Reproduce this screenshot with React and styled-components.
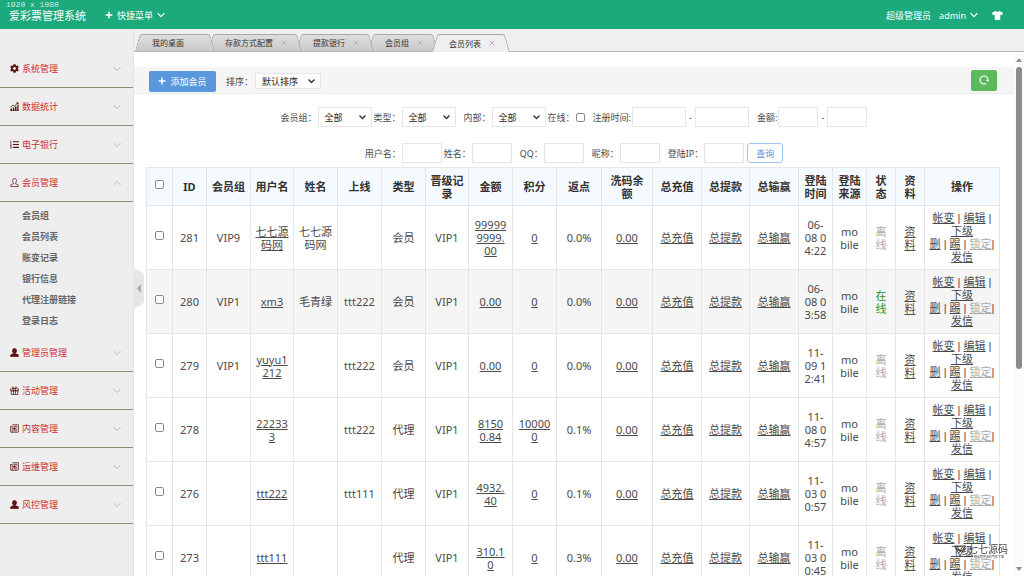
import React from "react";
import styled, { createGlobalStyle, css } from "styled-components";
import { FaPlus, FaTshirt, FaCog, FaListOl } from "react-icons/fa";

const GlobalStyle = createGlobalStyle`
  * {
    box-sizing: border-box;
  }

  body {
    margin: 0;
    background: #fff;
    color: #4a4a4a;
    font-family: "Noto Sans", "Noto Sans CJK SC", sans-serif;
    font-size: 9px;
    line-height: 13px;
  }

  button, input, select {
    margin: 0;
    font: inherit;
    color: inherit;
  }

  a {
    color: inherit;
  }
`;

const Page = styled.div`
  display: flex;
  flex-direction: column;
  height: 100vh;
  overflow: hidden;
`;

const TopBar = styled.header`
  position: relative;
  flex: none;
  display: flex;
  align-items: center;
  height: 29px;
  padding: 1px 21px 0 9px;
  background: #1caa7c;
  color: #fff;
`;

const Resolution = styled.span`
  position: absolute;
  left: 6px;
  top: 0;
  font-family: "Liberation Mono", monospace;
  font-size: 8px;
  line-height: 9px;
  color: #d5f0e6;
`;

const Brand = styled.a`
  margin-right: 19px;
  font-size: 11px;
  text-decoration: none;
`;

const TopButton = styled.button`
  display: flex;
  align-items: center;
  gap: 4px;
  padding: 0;
  border: 0;
  background: none;
  cursor: pointer;
`;

const TopRight = styled.div`
  display: flex;
  align-items: center;
  margin-left: auto;
  gap: 8px;
`;

const SkinButton = styled(TopButton)`
  margin-left: 6px;
  font-size: 11px;
`;

const Body = styled.div`
  flex: 1;
  display: flex;
  min-height: 0;
`;

const Sidebar = styled.nav`
  position: relative;
  flex: none;
  width: 134px;
  padding-top: 21px;
  border-right: 1px solid #e2e2e2;
  background: #eee;
`;

const MenuHeader = styled.button`
  display: flex;
  align-items: center;
  gap: 3px;
  width: 100%;
  height: 38px;
  padding: 0 12px 0 10px;
  border: 0;
  border-bottom: 1px solid #8e907c;
  background: none;
  color: #cf2f35;
  text-align: left;
  cursor: pointer;

  .menu-icon {
    width: 9px;
    height: 9px;
    color: #5c1010;
  }

  .menu-arrow {
    margin-left: auto;
    color: #b4b4b4;
  }
`;

const SubMenu = styled.ul`
  margin: 0;
  padding: 3px 0 3px 22px;
  list-style: none;
  font-weight: 600;
  color: #666;

  li {
    line-height: 21px;
  }

  a {
    text-decoration: none;
  }
`;

const CollapseHandle = styled.button`
  position: absolute;
  left: 133px;
  top: 239px;
  z-index: 2;
  width: 11px;
  height: 41px;
  padding: 0;
  border: 0;
  background: none;

  svg {
    display: block;
  }
`;

const Main = styled.div`
  flex: 1;
  display: flex;
  flex-direction: column;
  min-width: 0;
`;

const TabBar = styled.div`
  flex: none;
  display: flex;
  align-items: flex-end;
  height: 23px;
  padding-left: 1px;
  border-bottom: 1px solid #b4b4b4;
  background: #efeef0;
`;

const tabSide = css`
  content: "";
  position: absolute;
  top: 0;
  bottom: 0;
  z-index: -1;
  border-top: 1px solid #a9a9a9;
  background: ${p => (p.$active ? "#efeef0" : "linear-gradient(#dedede, #c9c9c9)")};
`;

const Tab = styled.div`
  position: relative;
  isolation: isolate;
  z-index: ${p => (p.$active ? 9 : 8 - p.$index)};
  display: flex;
  align-items: center;
  gap: 8px;
  height: ${p => (p.$active ? 18 : 17)}px;
  margin-left: ${p => (p.$index ? -6 : 0)}px;
  margin-bottom: ${p => (p.$active ? -1 : 0)}px;
  padding: 0 ${p => (p.$closable ? 15 : 30)}px 0 17px;
  font-size: 8px;
  color: #333;

  &::before {
    ${tabSide}
    left: 0;
    right: 50%;
    border-left: 1px solid #a9a9a9;
    border-top-left-radius: 3px;
    transform: skewX(-16deg);
    transform-origin: bottom;
  }

  &::after {
    ${tabSide}
    left: calc(50% - 4px);
    right: 0;
    border-right: 1px solid #a9a9a9;
    border-top-right-radius: 3px;
    transform: skewX(16deg);
    transform-origin: bottom;
  }
`;

const TabLabel = styled.button`
  padding: 0;
  border: 0;
  background: none;
`;

const TabClose = styled.button`
  display: flex;
  padding: 0;
  border: 0;
  background: none;
  color: #b0b0b0;
`;

const Frame = styled.div`
  flex: 1;
  display: flex;
  min-height: 0;
`;

const Content = styled.main`
  flex: 1;
  min-width: 0;
  padding-top: 15px;
  overflow: hidden;
`;

const Toolbar = styled.div`
  display: flex;
  align-items: center;
  height: 27px;
  padding: 2px 17px 0 15px;
  border-bottom: 1px solid #ebebeb;
  background: #f5f5f5;

  label {
    margin-right: 2px;
  }
`;

const AddButton = styled.button`
  display: flex;
  align-items: center;
  justify-content: center;
  gap: 4px;
  width: 67px;
  height: 21px;
  margin-right: 10px;
  padding: 0;
  border: 0;
  border-radius: 2px;
  background: #5a98de;
  color: #fff;
`;

const RefreshButton = styled.button`
  display: flex;
  align-items: center;
  justify-content: center;
  width: 26px;
  height: 21px;
  margin-left: auto;
  margin-bottom: 2px;
  padding: 0;
  border: 0;
  border-radius: 2px;
  background: #5eb95e;
  color: #fff;
`;

const SelectBox = styled.span`
  display: inline-grid;
  align-items: center;
  width: ${p => p.$width}px;

  select {
    grid-area: 1 / 1;
    width: 100%;
    height: ${p => p.$height}px;
    padding: 0 6px;
    border: 1px solid #e6e6e6;
    border-radius: 0;
    background: #fff;
    color: #222;
    appearance: none;
  }

  svg {
    grid-area: 1 / 1;
    justify-self: end;
    margin-right: 6px;
    color: #333;
    pointer-events: none;
  }
`;

const Filters = styled.form`
  display: grid;
  gap: 16px;
  padding: 13px 14px 4px 12px;
`;

const FilterRow = styled.div`
  display: flex;
  align-items: center;
  justify-content: center;
  height: 20px;
`;

const Field = styled.span`
  display: flex;
  align-items: center;
  gap: 1px;
  margin-left: ${p => (p.$wide ? 8 : 2)}px;
`;

const TextInput = styled.input`
  width: ${p => (p.$wide ? 54 : 40)}px;
  height: 20px;
  padding: 0 4px;
  border: 1px solid #e6e6e6;
  outline: 0;
  background: #fff;
`;

const Dash = styled.span`
  width: 7px;
  text-align: center;
`;

const Checkbox = styled.input.attrs({ type: "checkbox" })`
  appearance: none;
  width: 9px;
  height: 9px;
  border: 1px solid #8a8a8a;
  border-radius: 2px;
  background: #fff;

  &:checked {
    background: #5a98de;
  }
`;

const QueryButton = styled.button`
  width: 36px;
  height: 20px;
  margin-left: 3px;
  padding: 0;
  border: 1px solid #9fc5f3;
  border-radius: 3px;
  background: #fff;
  color: #5a98de;
`;

const TableWrap = styled.div`
  padding: 0 14px 0 12px;
`;

const Table = styled.table`
  width: 100%;
  border-collapse: collapse;
  table-layout: fixed;
  font-size: 11px;
  line-height: 13px;
  text-align: center;

  th,
  td {
    height: 64px;
    padding: 0;
    border: 1px solid #e6e6e6;
    white-space: pre;
  }

  th {
    height: 38px;
    background: #f5fafe;
    color: #333;
    font-weight: 700;
  }

  ${Checkbox} {
    display: block;
    margin: 0 auto 4px;
  }
`;

const Row = styled.tr`
  background: ${p => (p.$active ? "#f5f5f5" : "#fff")};
`;

const Actions = styled.td`
  font-family: "Liberation Sans", "Noto Sans CJK SC", sans-serif;
`;

const Status = styled.span`
  color: ${p => (p.$online ? "#1c991c" : "#aaa")};
`;

const LockLink = styled.a`
  color: #aaa;
`;

const ScrollTrack = styled.div`
  flex: none;
  display: flex;
  flex-direction: column;
  align-items: center;
  width: 10px;
  padding: 6px 0 5px;
  background: #fcfcfc;
  color: #8a8a8a;

  svg {
    display: block;
  }
`;

const ScrollRail = styled.div`
  flex: 1;
  padding: 5px 0;
`;

const ScrollThumb = styled.div`
  width: 6px;
  height: 61%;
  border-radius: 3px;
  background: #8b8b8b;
`;

const Watermark = styled.div`
  position: fixed;
  right: 16px;
  bottom: 17px;
  display: flex;
  gap: 2px;
  color: #444;
  font-family: "Liberation Serif", "Noto Sans CJK SC", serif;
  font-size: 10px;
  line-height: 11px;

  small {
    display: block;
    font-size: 3px;
    line-height: 4px;
  }
`;

const Chevron = ({ up, width = 8, stroke = 1, className }) => (
  <svg className={className} width={width} height="6" viewBox="0 0 8 6" fill="none" stroke="currentColor" strokeWidth={stroke}>
    <path d={up ? "M.6 4.8 4 1.4l3.4 3.4" : "M.6 1.2 4 4.6l3.4-3.4"} />
  </svg>
);

const ChartIcon = props => (
  <svg viewBox="0 0 18 18" fill="currentColor" {...props}>
    <path d="M1 13h3v4H1zM5.5 11h3v6h-3zM10 9h3v8h-3zM14.500 6H17v11h-2.500zM0 17h18v1H0z" />
    <path d="M1 10.500 6 6.500l3 1.500 6-5.500" fill="none" stroke="currentColor" strokeWidth="1.600" />
    <path d="M11.500 1H17v5z" />
  </svg>
);

const UserIcon = ({ outline, ...props }) => (
  <svg viewBox="0 0 18 18" fill={outline ? "none" : "currentColor"} stroke="currentColor" strokeWidth="1.400" {...props}>
    <path d="M9 1.200c2.600 0 4 1.800 4 4.200 0 2-.9 3.900-2.200 4.800v1.300l5 1.600c.8.300 1 .8 1 1.600V17H1.200v-2.300c0-.8.300-1.300 1-1.600l5-1.600v-1.300C5.900 9.300 5 7.400 5 5.400 5 3 6.400 1.200 9 1.200z" />
  </svg>
);

const GiftIcon = props => (
  <svg viewBox="0 0 18 18" fill="none" stroke="currentColor" strokeWidth="1.400" {...props}>
    <path d="M1 5.500h16v4H1zM2.500 9.500h13V17h-13zM7 5.500V17M11 5.500V17M9 5C8 2 4.500 1 4.500 3c0 1.300 1.500 2 4.500 2 3 0 4.500-.7 4.500-2C13.500 1 10 2 9 5z" />
  </svg>
);

const NewsIcon = props => (
  <svg viewBox="0 0 18 18" fill="none" stroke="currentColor" strokeWidth="1.500" {...props}>
    <path d="M4.500 1.500h12.700v13.200q0 1.800-1.800 1.800H2.800Q.8 16.500.8 14.500V5h3.700v9.700q0 1.800-1.700 1.800M7 4.700h7.700M7 13.700h7.700M12.500 7.700h2.200M12.500 10.700h2.200" />
    <path d="M7.500 7.700h3v3h-3z" fill="currentColor" />
  </svg>
);

const RefreshIcon = () => (
  <svg width="10" height="10" viewBox="0 0 20 20" fill="none" stroke="currentColor" strokeWidth="2.200">
    <path d="M14 16.900A8 8 0 1 1 18 10" />
    <path d="M13.500 10H20l-2.500 4z" fill="currentColor" stroke="none" />
  </svg>
);

const MemberIcon = props => <UserIcon outline {...props} />;

const menus = [
  { title: "系统管理", icon: FaCog },
  { title: "数据统计", icon: ChartIcon },
  { title: "电子银行", icon: FaListOl },
  {
    title: "会员管理",
    icon: MemberIcon,
    items: ["会员组", "会员列表", "账变记录", "银行信息", "代理注册链接", "登录日志"]
  },
  { title: "管理员管理", icon: UserIcon },
  { title: "活动管理", icon: GiftIcon },
  { title: "内容管理", icon: NewsIcon },
  { title: "运维管理", icon: NewsIcon },
  { title: "风控管理", icon: UserIcon }
];

const tabs = ["我的桌面", "存款方式配置", "提款银行", "会员组", "会员列表"];

const columns = [
  ["ID", 34],
  ["会员组", 44],
  ["用户名", 43],
  ["姓名", 44],
  ["上线", 44],
  ["类型", 44],
  ["晋级记\n录", 43],
  ["金额", 44],
  ["积分", 44],
  ["返点", 45],
  ["洗码余\n额", 51],
  ["总充值", 49],
  ["总提款", 48],
  ["总输赢", 49],
  ["登陆\n时间", 34],
  ["登陆\n来源", 34],
  ["状\n态", 29],
  ["资\n料", 29],
  ["操作"]
];

const members = [
  { id: 281, group: "VIP9", user: "七七源\n码网", name: "七七源\n码网", parent: "", type: "会员", amount: "99999\n9999.\n00", points: "0", rebate: "0.0%", time: "06-\n08 0\n4:22" },
  { id: 280, group: "VIP1", user: "xm3", name: "毛青绿", parent: "ttt222", type: "会员", amount: "0.00", points: "0", rebate: "0.0%", time: "06-\n08 0\n3:58", online: true },
  { id: 279, group: "VIP1", user: "yuyu1\n212", name: "", parent: "ttt222", type: "会员", amount: "0.00", points: "0", rebate: "0.0%", time: "11-\n09 1\n2:41" },
  { id: 278, group: "", user: "22233\n3", name: "", parent: "ttt222", type: "代理", amount: "8150\n0.84", points: "10000\n0", rebate: "0.1%", time: "11-\n08 0\n4:57" },
  { id: 276, group: "", user: "ttt222", name: "", parent: "ttt111", type: "代理", amount: "4932.\n40", points: "0", rebate: "0.1%", time: "11-\n03 0\n0:57" },
  { id: 273, group: "", user: "ttt111", name: "", parent: "", type: "代理", amount: "310.1\n0", points: "0", rebate: "0.3%", time: "11-\n03 0\n0:45" }
];

const Select = ({ id, width = 54, height = 20, option }) => (
  <SelectBox $width={width} $height={height}>
    <select id={id}>
      <option>{option}</option>
    </select>
    <Chevron width={7} stroke={1.6} />
  </SelectBox>
);

const InputField = ({ id, label, wide }) => (
  <Field $wide={wide}>
    <label htmlFor={id}>{label}</label>
    <TextInput id={id} />
  </Field>
);

const SelectField = ({ id, label, wide }) => (
  <Field $wide={wide}>
    <label htmlFor={id}>{label}</label>
    <Select id={id} option="全部" />
  </Field>
);

const MemberRow = ({ member, active }) => (
  <Row $active={active}>
    <td><Checkbox aria-label={`${member.id}`} /></td>
    <td>{member.id}</td>
    <td>{member.group}</td>
    <td><a href="#user">{member.user}</a></td>
    <td>{member.name}</td>
    <td>{member.parent}</td>
    <td>{member.type}</td>
    <td>VIP1</td>
    <td><a href="#amount">{member.amount}</a></td>
    <td><a href="#points">{member.points}</a></td>
    <td>{member.rebate}</td>
    <td><a href="#wash">0.00</a></td>
    <td><a href="#recharge">总充值</a></td>
    <td><a href="#withdraw">总提款</a></td>
    <td><a href="#profit">总输赢</a></td>
    <td>{member.time}</td>
    <td>{"mo\nbile"}</td>
    <td><Status $online={member.online}>{member.online ? "在\n线" : "离\n线"}</Status></td>
    <td><a href="#info">{"资\n料"}</a></td>
    <Actions>
      <a href="#log">帐变</a> | <a href="#edit">编辑</a> |<br />
      <a href="#sub">下级</a><br />
      <a href="#del">删</a> | <a href="#kick">踢</a> | <LockLink href="#lock">锁定</LockLink>|<br />
      <a href="#msg">发信</a>
    </Actions>
  </Row>
);

const App = () => (
  <Page>
    <GlobalStyle />
    <TopBar>
      <Resolution>1920 x 1080</Resolution>
      <Brand href="#home">爱彩票管理系统</Brand>
      <TopButton>
        <FaPlus size={8} />
        快捷菜单
        <Chevron stroke={1.2} />
      </TopButton>
      <TopRight>
        <span>超级管理员</span>
        <TopButton>
          admin
          <Chevron stroke={1.2} />
        </TopButton>
        <SkinButton aria-label="换肤">
          <FaTshirt />
        </SkinButton>
      </TopRight>
    </TopBar>

    <Body>
      <Sidebar>
        {menus.map(({ title, icon: Icon, items }) => (
          <React.Fragment key={title}>
            <MenuHeader>
              <Icon className="menu-icon" />
              {title}
              <Chevron up={!!items} className="menu-arrow" />
            </MenuHeader>
            {items && (
              <SubMenu>
                {items.map(item => (
                  <li key={item}><a href="#menu">{item}</a></li>
                ))}
              </SubMenu>
            )}
          </React.Fragment>
        ))}
        <CollapseHandle aria-label="收起菜单">
          <svg width="11" height="41" viewBox="0 0 11 41">
            <path d="M0 0 9 4.500Q11 5.500 11 8v25q0 2.500-2 3.500L0 41z" fill="#e6e6e6" />
            <path d="M8 16v9l-4-4.500z" fill="#aaa" />
          </svg>
        </CollapseHandle>
      </Sidebar>

      <Main>
        <TabBar>
          {tabs.map((tab, i) => (
            <Tab key={tab} $index={i} $active={i === tabs.length - 1} $closable={i > 0}>
              <TabLabel>{tab}</TabLabel>
              {i > 0 && (
                <TabClose aria-label="关闭">
                  <svg width="6" height="6" viewBox="0 0 6 6" stroke="currentColor">
                    <path d="M.8.8l4.400 4.400M5.200.8.8 5.200" />
                  </svg>
                </TabClose>
              )}
            </Tab>
          ))}
        </TabBar>

        <Frame>
          <Content>
            <Toolbar>
              <AddButton>
                <FaPlus size={8} />
                添加会员
              </AddButton>
              <label htmlFor="sort">排序：</label>
              <Select id="sort" width={66} height={16} option="默认排序" />
              <RefreshButton aria-label="刷新">
                <RefreshIcon />
              </RefreshButton>
            </Toolbar>

            <Filters>
              <FilterRow>
                <SelectField id="group" label="会员组：" />
                <SelectField id="type" label="类型：" />
                <SelectField id="inner" label="内部：" wide />
                <Field>
                  <label htmlFor="online">在线：</label>
                  <Checkbox id="online" />
                </Field>
                <Field $wide>
                  <label htmlFor="from">注册时间:</label>
                  <TextInput id="from" $wide />
                  <Dash>-</Dash>
                  <TextInput aria-label="注册时间" $wide />
                </Field>
                <Field $wide>
                  <label htmlFor="min">金额:</label>
                  <TextInput id="min" />
                  <Dash>-</Dash>
                  <TextInput aria-label="金额" />
                </Field>
              </FilterRow>
              <FilterRow>
                <InputField id="username" label="用户名：" />
                <InputField id="realname" label="姓名：" />
                <InputField id="qq" label="QQ：" wide />
                <InputField id="nick" label="昵称：" wide />
                <InputField id="ip" label="登陆IP：" wide />
                <QueryButton type="button">查询</QueryButton>
              </FilterRow>
            </Filters>

            <TableWrap>
              <Table>
                <colgroup>
                  <col width="26" />
                  {columns.map(([title, width]) => (
                    <col key={title} width={width} />
                  ))}
                </colgroup>
                <thead>
                  <tr>
                    <th><Checkbox aria-label="全选" /></th>
                    {columns.map(([title]) => (
                      <th key={title}>{title}</th>
                    ))}
                  </tr>
                </thead>
                <tbody>
                  {members.map(member => (
                    <MemberRow key={member.id} member={member} active={member.id === 280} />
                  ))}
                </tbody>
              </Table>
            </TableWrap>
          </Content>

          <ScrollTrack>
            <svg width="6" height="4" viewBox="0 0 6 4"><path d="M3 0l3 4H0z" fill="currentColor" /></svg>
            <ScrollRail>
              <ScrollThumb />
            </ScrollRail>
            <svg width="6" height="4" viewBox="0 0 6 4"><path d="M3 4l3-4H0z" fill="currentColor" /></svg>
          </ScrollTrack>
        </Frame>
      </Main>
    </Body>

    <Watermark>
      <svg width="12" height="13" viewBox="0 0 24 26" fill="none" stroke="currentColor" strokeWidth="2">
        <path d="M1 4h22L12 24zM6 4l6 10 6-10M3 9l13 5M21 9 9 18" />
      </svg>
      <div>
        七七源码
        <small>千个精品程序源码等你下载</small>
      </div>
    </Watermark>
  </Page>
);

export default App;
